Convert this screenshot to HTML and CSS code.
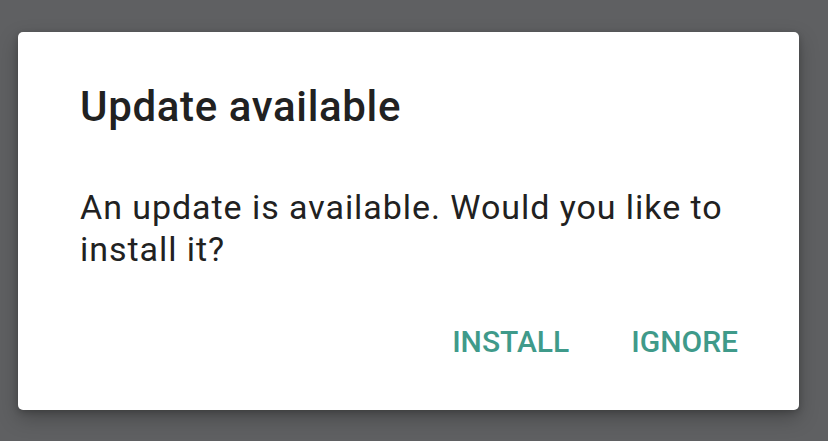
FILE: index.html
```html
<!DOCTYPE html>
<html lang="en">
<head>
    <meta charset="UTF-8">
    <meta name="viewport" content="width=device-width, initial-scale=1.0">
    <title>Update available</title>
    <link rel="stylesheet" href="styles.css">
</head>
<body>
    <div class="dialog">
        <h1 class="dialog-title">Update available</h1>
        <p class="dialog-message">An update is available. Would you like to install it?</p>
        <div class="dialog-actions">
            <button class="action-btn">INSTALL</button>
            <button class="action-btn">IGNORE</button>
        </div>
    </div>
</body>
</html>
```

FILE: styles.css
```css
* {
    margin: 0;
    padding: 0;
    box-sizing: border-box;
}
body {
    font-family: Roboto, "Noto Sans", sans-serif;
    background: #5f6062;
    width: 828px;
    height: 441px;
    padding: 32px 29px 0 18px;
    overflow: hidden;
}
.dialog {
    background: #ffffff;
    width: 781px;
    height: 378px;
    border-radius: 5px;
    padding: 50px 61px 0 62px;
    box-shadow: 0 8px 20px rgba(0, 0, 0, 0.25), 0 2px 6px rgba(0, 0, 0, 0.2);
}
.dialog-title {
    font-size: 42px;
    line-height: 50px;
    font-weight: 500;
    letter-spacing: 0.65px;
    color: #212121;
}
.dialog-message {
    margin-top: 54px;
    font-size: 34px;
    line-height: 42px;
    letter-spacing: 0.95px;
    color: #212121;
    width: 690px;
}
.dialog-actions {
    margin-top: 52px;
    display: flex;
    justify-content: flex-end;
    gap: 62px;
}
.action-btn {
    background: none;
    border: none;
    font-family: inherit;
    font-size: 30px;
    line-height: 40px;
    font-weight: 500;
    color: #3f9a8a;
    cursor: pointer;
}
```
